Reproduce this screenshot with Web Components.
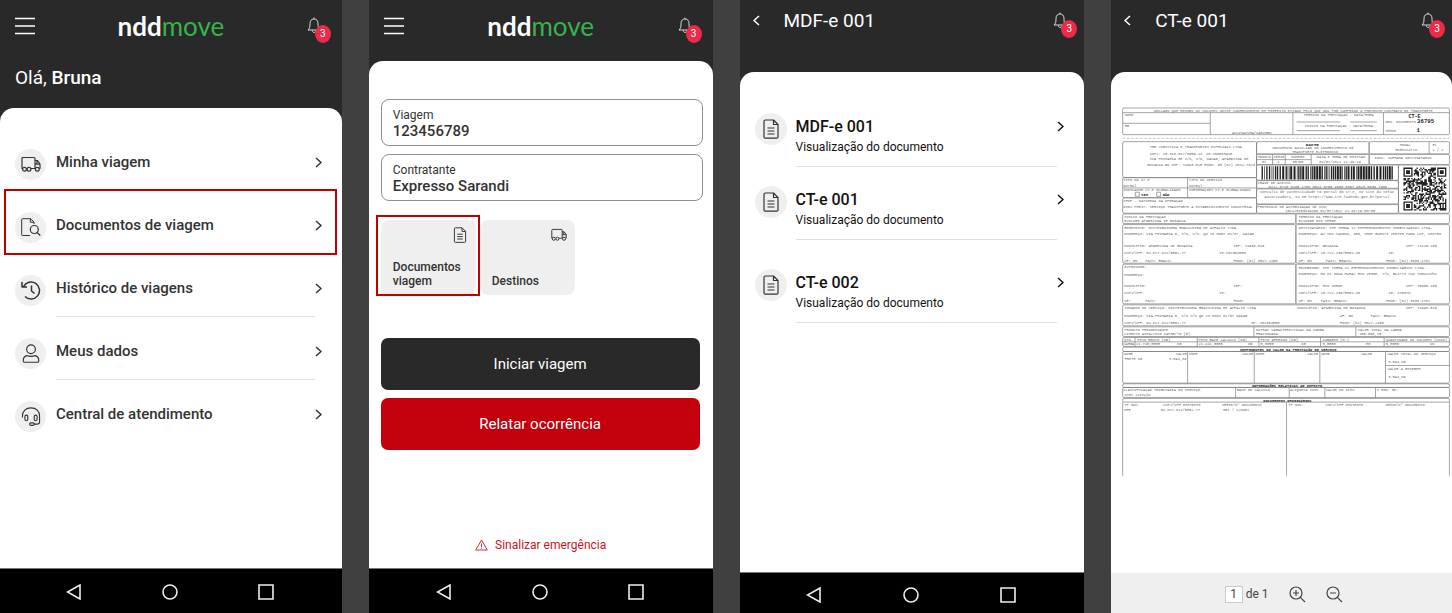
<!DOCTYPE html>
<html lang="pt-BR">
<head>
  <meta charset="utf-8">
  <meta name="viewport" content="width=device-width, initial-scale=1">
  <title>nddmove</title>
  <style>
    body {
      background-color: #404040;
      font-family: Roboto, "Liberation Sans", sans-serif;
      margin: 0;
    }

    main {
      display: grid;
      gap: 27px;
      grid-template-columns: 342fr 344fr 345fr 341fr;
      min-height: 100vh;
    }

    .trip {
      display: flex;
      flex-direction: column;
      gap: 8px;
      padding: 0 13px 0 12px;
    }

    .tiles {
      display: flex;
      gap: 4px;
      margin: 11px 0 35px;
    }

    .spaced {
      margin-top: 10px;
    }
  </style>
</head>
<body>
  <main>
    <phone-screen style="--sheet-top: 20px">
      <home-header slot="header" name="Bruna"></home-header>
      <menu-item icon="truck">Minha viagem</menu-item>
      <menu-item icon="search-doc" marked>Documentos de viagem</menu-item>
      <menu-item icon="history">Histórico de viagens</menu-item>
      <menu-item icon="user">Meus dados</menu-item>
      <menu-item icon="headset" last>Central de atendimento</menu-item>
      <android-nav slot="footer"></android-nav>
    </phone-screen>

    <phone-screen style="--sheet-top: 38px">
      <home-header slot="header"></home-header>
      <div class="trip">
        <info-field label="Viagem" value="123456789"></info-field>
        <info-field label="Contratante" value="Expresso Sarandi"></info-field>
        <div class="tiles">
          <action-tile icon="doc" marked>Documentos viagem</action-tile>
          <action-tile icon="truck">Destinos</action-tile>
        </div>
        <big-button>Iniciar viagem</big-button>
        <big-button danger>Relatar ocorrência</big-button>
      </div>
      <emergency-link slot="bottom">Sinalizar emergência</emergency-link>
      <android-nav slot="footer"></android-nav>
    </phone-screen>

    <phone-screen style="--sheet-top: 30px">
      <page-header slot="header">MDF-e 001</page-header>
      <document-item name="MDF-e 001">Visualização do documento</document-item>
      <document-item name="CT-e 001">Visualização do documento</document-item>
      <document-item class="spaced" name="CT-e 002">Visualização do documento</document-item>
      <android-nav slot="footer" short></android-nav>
    </phone-screen>

    <phone-screen style="--sheet-top: 35px">
      <page-header slot="header">CT-e 001</page-header>
      <cte-document></cte-document>
      <viewer-bar slot="footer"></viewer-bar>
    </phone-screen>
  </main>

  <script>
    const icons = {
      menu: { box: '0 0 20 18', path: '<path d="M0 1.500h20M0 9h20M0 16.500h20"/>' },
      bell: { box: '0 0 14 17', path: '<path d="M1 13c1.700-1.500 2-3 2-6.500C3 3.500 4.600 2 7 2s4 1.500 4 4.500c0 3.500.3 5 2 6.500zM7 2V.6M5.500 13.500c0 2.800 3 2.800 3 0"/>' },
      next: { box: '0 0 7 11', path: '<path d="M1 1l5 4.500L1 10"/>' },
      back: { box: '0 0 7 11', path: '<path d="M6 1L1 5.500 6 10"/>' },
      truck: { box: '0 0 20 16', path: '<path d="M2 12H1V2q0-1 1-1h11q1 0 1 1v10H9.900M14 4h2.500L19 7.500V12h-.8M14 7.700h5M16 4v3.700"/><circle cx="3.500" cy="12.700" r="1.900"/><circle cx="8" cy="12.700" r="1.900"/><circle cx="16.300" cy="12.700" r="1.900"/>' },
      'search-doc': { box: '0 0 20 19', path: '<path d="M9 17.500H1.500q-.8 0-.8-.8V1.500q0-.8.8-.8h8L13 4v2M9.300.7v3.500H13" stroke-width="1"/><circle cx="13.300" cy="11.500" r="4"/><path d="M16 14.500l3.300 3"/>' },
      history: { box: '0 0 20 19', path: '<path d="M2.500 5.500A8.500 8.500 0 1 1 4 15.500M1 1v5h5M10.500 4.500V10l3 2.500" stroke-width="1.500"/>' },
      user: { box: '0 0 18 20', path: '<circle cx="9" cy="5.500" r="4.600"/><path d="M4.500 12.200C2 13 .8 14.500.8 17.500q0 1.700 1.800 1.700h12.800q1.800 0 1.800-1.700c0-3-1.200-4.500-3.700-5.300q-4.500 1.800-9 0z"/>' },
      headset: { box: '0 0 20 20', path: '<path d="M1 11V9.500C1 4.500 4.500.9 10 .9s9 3.600 9 8.600V16q0 2-3 2h-3"/><rect x="3.600" y="8.500" width="3" height="6" rx="1.500"/><rect x="13.400" y="8.500" width="3" height="6" rx="1.500"/><rect x="8.500" y="16.700" width="5" height="2.600" rx="1.300"/>' },
      doc: { box: '0 0 16 20', path: '<path d="M2.500 1h8L15 5.500V18q0 1.200-1.200 1.200H2.200Q1 19.200 1 18V2.200Q1 1 2.500 1zM10.500 1v4.500H15M4.500 9h7M4.500 12h7M4.500 15h7"/>' },
      alert: { box: '0 0 13 12', path: '<path d="M6.500 1l5.800 10H.7zM6.500 4.500v3.300M6.500 8.700v1.100"/>' },
      'zoom-in': { box: '0 0 17 17', path: '<circle cx="7" cy="7" r="6"/><path d="M11.300 11.300L16 16M4 7h6M7 4v6"/>' },
      'zoom-out': { box: '0 0 17 17', path: '<circle cx="7" cy="7" r="6"/><path d="M11.300 11.300L16 16M4 7h6"/>' }
    }

    class AppIcon extends HTMLElement {
      connectedCallback () {
        const icon = icons[this.getAttribute('name')]

        if (!this.shadowRoot) this.attachShadow({ mode: 'open' })

        this.shadowRoot.innerHTML = `
          <style>
            :host {
              display: block;
              flex: none;
            }

            svg {
              display: block;
              fill: none;
              height: 100%;
              stroke: currentColor;
              stroke-linejoin: round;
              stroke-width: var(--stroke, 1.2);
              width: 100%;
            }
          </style>
          <svg viewBox="${icon.box}" aria-hidden="true">${icon.path}</svg>
        `
      }
    }

    class PhoneScreen extends HTMLElement {
      constructor () {
        super()
        this.attachShadow({ mode: 'open' }).innerHTML = `
          <style>
            :host {
              background-color: #292929;
              display: flex;
              flex-direction: column;
              min-width: 0;
            }

            .sheet {
              background-color: white;
              border-radius: 14px 14px 0 0;
              display: flex;
              flex: 1;
              flex-direction: column;
              justify-content: space-between;
              padding-top: var(--sheet-top);
            }
          </style>
          <slot name="header"></slot>
          <div class="sheet">
            <div><slot></slot></div>
            <slot name="bottom"></slot>
          </div>
          <slot name="footer"></slot>
        `
      }
    }

    class NotificationBell extends HTMLElement {
      constructor () {
        super()
        this.attachShadow({ mode: 'open' }).innerHTML = `
          <style>
            :host {
              display: block;
            }

            button {
              background: transparent;
              border: none;
              color: #ddd;
              cursor: pointer;
              display: block;
              font: inherit;
              padding: 0;
              position: relative;
            }

            app-icon {
              height: 17px;
              width: 14px;
              --stroke: 1;
            }

            span {
              background-color: #ec2b4b;
              border-radius: 50%;
              color: white;
              font-size: 10px;
              height: 18px;
              left: 8px;
              line-height: 18px;
              position: absolute;
              text-align: center;
              top: 8px;
              width: 16px;
            }
          </style>
          <button aria-label="Notificações"><app-icon name="bell"></app-icon><span>3</span></button>
        `
      }
    }

    class HomeHeader extends HTMLElement {
      connectedCallback () {
        const name = this.getAttribute('name')

        if (!this.shadowRoot) this.attachShadow({ mode: 'open' })

        this.shadowRoot.innerHTML = `
          <style>
            :host {
              color: white;
              display: block;
            }

            .bar {
              align-items: center;
              display: grid;
              grid-template-columns: 20px 1fr 14px;
              height: 51px;
              padding: 0 21px 10px 15px;
            }

            .menu {
              background: transparent;
              border: none;
              color: white;
              cursor: pointer;
              padding: 0;
            }

            .menu app-icon {
              height: 18px;
              width: 20px;
              --stroke: 1.6;
            }

            .logo {
              font-family: Lato, sans-serif;
              font-size: 26px;
              font-weight: 700;
              line-height: 32px;
              text-align: center;
            }

            .logo span {
              color: #34b44a;
              font-weight: 400;
            }

            p {
              font-size: 19px;
              line-height: 24px;
              margin: 0;
              padding: 5px 15px 18px;
            }

            b {
              font-weight: 500;
            }
          </style>
          <div class="bar">
            <button class="menu" aria-label="Menu"><app-icon name="menu"></app-icon></button>
            <div class="logo">ndd<span>move</span></div>
            <notification-bell></notification-bell>
          </div>
          ${name ? `<p>Olá, <b>${name}</b></p>` : ''}
        `
      }
    }

    class PageHeader extends HTMLElement {
      constructor () {
        super()
        this.attachShadow({ mode: 'open' }).innerHTML = `
          <style>
            :host {
              align-items: center;
              color: white;
              display: flex;
              height: 40px;
              padding: 0 17px 32px 13px;
            }

            button {
              background: transparent;
              border: none;
              color: white;
              cursor: pointer;
              margin-right: 24px;
              padding: 0;
            }

            button app-icon {
              height: 11px;
              width: 7px;
              --stroke: 1.5;
            }

            h1 {
              flex: 1;
              font-size: 19px;
              font-weight: 400;
              margin: 0;
            }
          </style>
          <button aria-label="Voltar"><app-icon name="back"></app-icon></button>
          <h1><slot></slot></h1>
          <notification-bell></notification-bell>
        `
      }
    }

    class MenuItem extends HTMLElement {
      connectedCallback () {
        if (!this.shadowRoot) this.attachShadow({ mode: 'open' })

        this.shadowRoot.innerHTML = `
          <style>
            :host {
              display: block;
              position: relative;
            }

            a {
              align-items: center;
              color: #333;
              display: flex;
              font-size: 15px;
              font-weight: 500;
              gap: 10px;
              height: 63px;
              padding-left: 15px;
              text-decoration: none;
            }

            .icon {
              align-items: center;
              background-color: #efefef;
              border-radius: 50%;
              display: flex;
              height: 31px;
              justify-content: center;
              margin-top: 10px;
              width: 31px;
            }

            .icon app-icon {
              height: 19px;
              width: 20px;
            }

            .text {
              align-items: center;
              border-bottom: 1px solid #e3e3e3;
              box-sizing: border-box;
              display: flex;
              flex: 1;
              height: 63px;
              justify-content: space-between;
              margin-right: 27px;
              padding-top: 6px;
            }

            .text app-icon {
              height: 11px;
              margin-right: -7px;
              width: 7px;
              --stroke: 1.5;
            }

            :host([last]) .text {
              border-color: transparent;
            }

            :host([marked])::after {
              border: 2px solid #c00000;
              content: '';
              inset: -2px 5px -1px 4px;
              pointer-events: none;
              position: absolute;
            }
          </style>
          <a href="#">
            <span class="icon"><app-icon name="${this.getAttribute('icon')}"></app-icon></span>
            <span class="text"><slot></slot><app-icon name="next"></app-icon></span>
          </a>
        `
      }
    }

    class InfoField extends HTMLElement {
      connectedCallback () {
        if (!this.shadowRoot) this.attachShadow({ mode: 'open' })

        this.shadowRoot.innerHTML = `
          <style>
            :host {
              border: 1px solid #8f8f8f;
              border-radius: 8px;
              box-sizing: border-box;
              color: #333;
              display: block;
              height: 47px;
              margin-right: -3px;
              padding: 8px 11px;
            }

            label {
              display: block;
              font-size: 12px;
              line-height: 15px;
            }

            input {
              background: transparent;
              border: none;
              box-sizing: border-box;
              color: inherit;
              display: block;
              font: 500 15px/17px Roboto, sans-serif;
              height: 17px;
              outline: none;
              padding: 0;
              width: 100%;
            }
          </style>
          <label for="value">${this.getAttribute('label')}</label>
          <input id="value" type="text" value="${this.getAttribute('value')}" readonly>
        `
      }
    }

    class ActionTile extends HTMLElement {
      connectedCallback () {
        if (!this.shadowRoot) this.attachShadow({ mode: 'open' })

        this.shadowRoot.innerHTML = `
          <style>
            :host {
              display: block;
              position: relative;
              width: 95px;
            }

            button {
              background-color: #efefef;
              border: none;
              border-radius: 8px;
              color: #333;
              cursor: pointer;
              display: flex;
              flex-direction: column;
              font: 500 12px/14px Roboto, sans-serif;
              height: 75px;
              justify-content: space-between;
              padding: 7px 8px 7px 12px;
              text-align: left;
              width: 100%;
            }

            app-icon {
              align-self: flex-end;
              height: 16px;
              width: 16px;
            }

            :host([marked])::after {
              border: 2px solid #c00000;
              content: '';
              inset: -5px -4px -1px -5px;
              pointer-events: none;
              position: absolute;
            }
          </style>
          <button><app-icon name="${this.getAttribute('icon')}"></app-icon><slot></slot></button>
        `
      }
    }

    class BigButton extends HTMLElement {
      constructor () {
        super()
        this.attachShadow({ mode: 'open' }).innerHTML = `
          <style>
            :host {
              display: block;
            }

            button {
              background-color: #292929;
              border: none;
              border-radius: 7px;
              color: white;
              cursor: pointer;
              display: block;
              font: 400 15px/20px Roboto, sans-serif;
              height: 52px;
              width: 100%;
            }

            :host([danger]) button {
              background-color: #c4000d;
            }
          </style>
          <button><slot></slot></button>
        `
      }
    }

    class EmergencyLink extends HTMLElement {
      constructor () {
        super()
        this.attachShadow({ mode: 'open' }).innerHTML = `
          <style>
            :host {
              display: flex;
              justify-content: center;
              padding-bottom: 15px;
            }

            a {
              align-items: center;
              color: #cf1225;
              display: flex;
              font-size: 12px;
              gap: 7px;
              line-height: 16px;
              text-decoration: none;
            }

            app-icon {
              height: 12px;
              width: 13px;
              --stroke: 0.9;
            }
          </style>
          <a href="#"><app-icon name="alert"></app-icon><slot></slot></a>
        `
      }
    }

    class DocumentItem extends HTMLElement {
      connectedCallback () {
        if (!this.shadowRoot) this.attachShadow({ mode: 'open' })

        this.shadowRoot.innerHTML = `
          <style>
            :host {
              display: block;
              height: 73px;
            }

            a {
              color: #111;
              display: flex;
              gap: 9px;
              padding-left: 15px;
              text-decoration: none;
            }

            .icon {
              align-items: center;
              background-color: #efefef;
              border-radius: 50%;
              color: #333;
              display: flex;
              height: 32px;
              justify-content: center;
              margin-top: 11px;
              width: 32px;
            }

            .icon app-icon {
              height: 20px;
              width: 16px;
            }

            .text {
              border-bottom: 1px solid #e0e0e0;
              box-sizing: border-box;
              display: flex;
              flex: 1;
              font-size: 12px;
              height: 65px;
              justify-content: space-between;
              line-height: 20px;
              margin-right: 27px;
              padding-top: 15px;
            }

            .text app-icon {
              height: 11px;
              margin: 4px -7px 0 0;
              width: 7px;
              --stroke: 1.5;
            }

            strong {
              display: block;
              font-size: 16px;
              font-weight: 500;
            }
          </style>
          <a href="#">
            <span class="icon"><app-icon name="doc"></app-icon></span>
            <span class="text">
              <span><strong>${this.getAttribute('name')}</strong><slot></slot></span>
              <app-icon name="next"></app-icon>
            </span>
          </a>
        `
      }
    }

    class AndroidNav extends HTMLElement {
      constructor () {
        super()
        this.attachShadow({ mode: 'open' }).innerHTML = `
          <style>
            :host {
              align-items: center;
              background-color: black;
              border-top: 1px solid #777;
              box-sizing: border-box;
              display: flex;
              gap: 80px;
              height: 45px;
              justify-content: center;
              padding: 2px 2px 0 0;
            }

            :host([short]) {
              gap: 81px;
              height: 41px;
              padding-top: 4px;
            }

            button {
              background: transparent;
              border: none;
              color: #eee;
              cursor: pointer;
              padding: 0;
            }

            svg {
              display: block;
              fill: none;
              height: 16px;
              stroke: currentColor;
              stroke-width: 1.6;
              width: 16px;
            }
          </style>
          <button aria-label="Voltar"><svg viewBox="0 0 16 16"><path d="M14 1v14L1.500 8z"/></svg></button>
          <button aria-label="Início"><svg viewBox="0 0 16 16"><circle cx="8" cy="8" r="7"/></svg></button>
          <button aria-label="Recentes"><svg viewBox="0 0 16 16"><path d="M1 1h14v14H1z"/></svg></button>
        `
      }
    }

    class ViewerBar extends HTMLElement {
      constructor () {
        super()
        this.attachShadow({ mode: 'open' }).innerHTML = `
          <style>
            :host {
              align-items: center;
              background-color: #efefef;
              box-sizing: border-box;
              color: #444;
              display: flex;
              font-size: 12px;
              height: 40px;
              justify-content: center;
              padding: 2px 0 0 4px;
            }

            label {
              align-items: center;
              display: flex;
              gap: 3px;
            }

            input {
              background-color: white;
              border: 1px solid #ccc;
              box-sizing: border-box;
              color: inherit;
              font: 400 12px Roboto, sans-serif;
              height: 17px;
              padding: 0;
              text-align: center;
              width: 18px;
            }

            button {
              background: transparent;
              border: none;
              color: inherit;
              cursor: pointer;
              margin-left: 20px;
              padding: 0;
            }

            app-icon {
              height: 17px;
              width: 17px;
            }
          </style>
          <label><input type="text" value="1" aria-label="Página"> de 1</label>
          <button aria-label="Ampliar"><app-icon name="zoom-in"></app-icon></button>
          <button aria-label="Reduzir"><app-icon name="zoom-out"></app-icon></button>
        `
      }
    }

    // boxes of the printed form: x, y, width, height
    const boxes = [
      [2, 3, 981, 80], [2, 104, 402, 108], [2, 212, 402, 60], [2, 273, 402, 46],
      [404, 104, 338, 37], [742, 104, 241, 37], [404, 142, 338, 31], [742, 142, 241, 31],
      [404, 174, 426, 46], [404, 221, 426, 23], [404, 246, 426, 45], [404, 293, 426, 26],
      [830, 174, 153, 145], [2, 321, 520, 29], [522, 321, 461, 29], [2, 353, 520, 116],
      [522, 353, 461, 116], [2, 472, 520, 119], [522, 472, 461, 119], [2, 594, 981, 63],
      [2, 660, 981, 29], [2, 692, 981, 27], [2, 721, 981, 13], [2, 734, 981, 95],
      [2, 831, 981, 11], [2, 842, 981, 30], [2, 875, 981, 11]
    ]

    const lines = 'M2 17H983M265 17V83M2 49H265M513 17V83M785 17V83M524 45H655M685 45H765M524 71H655M685 71H765' +
      'M197 212V272M2 243H404M922 104V141M452 142V173M490 142V173M568 142V173M404 158H568' +
      'M396 660V689M702 660V689M2 705H983M39 692V719M226 692V719M411 692V719M596 692V719M787 692V719' +
      'M197 734V829M397 734V829M594 734V829M791 734V829M791 776H983' +
      'M341 842V872M502 842V872M609 842V872M761 842V872M2 886V1107M494 886V1107M983 886V1107' +
      'M40 256h12v12H40zM104 256h12v12h-12z'

    // x, baseline, text
    const texts = [
      [96, 14, 'DECLARO QUE RECEBI OS VOLUMES DESTE CONHECIMENTO EM PERFEITO ESTADO PELO QUE DOU POR CUMPRIDO O PRESENTE CONTRATO DE TRANSPORTE'],
      [8, 27, 'NOME'], [8, 60, 'RG'], [330, 80, 'ASSINATURA/CARIMBO'],
      [545, 27, 'TÉRMINO DA PRESTAÇÃO - DATA/HORA'], [549, 60, 'INÍCIO DA PRESTAÇÃO - DATA/HORA'],
      [790, 49, 'NRO. DOCUMENTO'], [790, 75, 'SÉRIE'],
      [83, 124, 'TRR LOGISTICA E TRANSPORTES ESPECIAIS LTDA'],
      [83, 144, 'CNPJ: 10.316.517/0006-14'], [252, 144, 'IE:106033910'],
      [83, 160, 'VIA PRIMARIA 5E S/N, S/N, DAIAG, APARECIDA DE'],
      [76, 176, 'GOIANIA-GO CEP: 74993-510 FONE: 55 (62) 4011-7813'],
      [452, 127, 'DOCUMENTO AUXILIAR DO CONHECIMENTO DE'], [510, 139, 'TRANSPORTE ELETRÔNICO'],
      [834, 117, 'MODAL'], [820, 132, 'Rodoviário'], [932, 117, 'FL'], [932, 132, '1 / 1'],
      [408, 153, 'MODELO'], [455, 153, 'SÉRIE'], [508, 153, 'NÚMERO'], [585, 153, 'DATA E HORA DE EMISSÃO'],
      [420, 168, '57'], [466, 168, '1'], [512, 168, '36795'], [592, 168, '04/07/2022 11:46:19'],
      [758, 156, 'INSC. SUFRAMA DESTINATÁRIO'],
      [4, 223, 'TIPO DO CT-E'], [201, 223, 'TIPO DO SERVIÇO'], [4, 239, 'Normal'], [201, 239, 'Normal'],
      [4, 253, 'INDICADOR CT-E GLOBALIZADO'], [201, 253, 'INFORMAÇÕES CT-E GLOBALIZADO'],
      [4, 284, 'CFOP - NATUREZA DA OPERAÇÃO'],
      [4, 302, '6352 PREST. SERVIÇO TRANSPORTE A ESTABELECIMENTO INDUSTRIAL'],
      [407, 230, 'CHAVE DE ACESSO'], [440, 242, '5222 0710 3165 1700 0614 5700 1000 0367 9510 0036 7958'],
      [415, 257, 'Consulta de autenticidade no portal do CT-e, no site da Sefaz'],
      [428, 273, 'Autorizadora, ou em https://www.cte.fazenda.gov.br/portal'],
      [407, 303, 'PROTOCOLO DE AUTORIZAÇÃO DE USO:'], [490, 316, '152220103819406 04/07/2022 11:46:19-03:00'],
      [6, 332, 'INÍCIO DA PRESTAÇÃO'], [6, 345, '5201405 APARECIDA DE GOIANIA'],
      [530, 332, 'TÉRMINO DA PRESTAÇÃO'], [530, 345, '5218805 RIO VERDE'],
      [7, 365, 'REMETENTE: DISTRIBUIDORA BRASILEIRA DE ASFALTO LTDA'],
      [7, 383, 'ENDEREÇO: VIA PRIMARIA 5, S/N, S/N. QD 13 MODS 01/07, DAIAG'],
      [7, 419, 'MUNICÍPIO: APARECIDA DE GOIANIA'], [335, 419, 'CEP: 74993-510'],
      [7, 441, 'CNPJ/CPF: 04.817.821/0002-77'], [292, 441, 'IE:101364550'],
      [7, 464, 'UF: GO'], [70, 464, 'PAÍS: BRASIL'], [335, 464, 'FONE: (62) 3517-2100'],
      [530, 365, 'DESTINATÁRIO: SPE TERRA 11 EMPREENDIMENTOS IMOBILIÁRIOS LTDA.'],
      [530, 383, 'ENDEREÇO: AV SEN CANEDO, 800, SHOP BURITI CENTER PARK LOT, CENTRO'],
      [530, 419, 'MUNICÍPIO: GOIANIA'], [853, 419, 'CEP: 74110-100'],
      [530, 441, 'CNPJ/CPF: 10.722.136/0001-45'], [800, 441, 'IE:'],
      [530, 464, 'UF: GO'], [612, 464, 'PAÍS: BRASIL'], [793, 464, 'FONE: (62) 3883-1781'],
      [7, 484, 'EXPEDIDOR:'], [7, 507, 'ENDEREÇO:'], [7, 540, 'MUNICÍPIO:'], [335, 540, 'CEP:'],
      [7, 562, 'CNPJ/CPF:'], [292, 562, 'IE:'], [7, 585, 'UF:'], [70, 585, 'PAÍS:'], [335, 585, 'FONE:'],
      [530, 486, 'RECEBEDOR: SPE TERRA 11 EMPREENDIMENTOS IMOBILIÁRIOS LTDA.'],
      [530, 505, 'ENDEREÇO: RO ZI ZONA RURAL RIO VERDE, S/N, Bairro Sao Tomazinho'],
      [530, 541, 'MUNICÍPIO: RIO VERDE'], [853, 541, 'CEP: 75900-100'],
      [530, 562, 'CNPJ/CPF: 10.722.136/0001-45'], [800, 562, 'IE: ISENTO'],
      [530, 586, 'UF: GO'], [597, 586, 'PAÍS: BRASIL'], [793, 586, 'FONE: (62) 3883-1781'],
      [7, 606, 'TOMADOR DO SERVIÇO: DISTRIBUIDORA BRASILEIRA DE ASFALTO LTDA'],
      [526, 606, 'MUNICÍPIO: APARECIDA DE GOIANIA'], [853, 606, 'CEP: 74993-510'],
      [7, 629, 'ENDEREÇO: VIA PRIMARIA 5, S/N S/N QD 13 MODS 01/07 DAIAG'],
      [654, 629, 'UF: GO'], [746, 629, 'PAÍS: BRASIL'],
      [7, 652, 'CNPJ/CPF: 04.817.821/0002-77'], [387, 652, 'IE: 101364550'], [654, 652, 'FONE: (62) 3517-2100'],
      [7, 671, 'PRODUTO PREDOMINANTE'], [402, 671, 'OUTRAS CARACTERÍSTICAS DA CARGA'], [708, 671, 'VALOR TOTAL DA CARGA'],
      [7, 685, 'CIMENTO ASFALTICO CAP50/70 (G)'], [402, 685, 'FRACIONADA'], [712, 685, '100.096,10'],
      [7, 703, 'QTD.'], [46, 703, 'PESO BRUTO (KG)'], [230, 703, 'PESO BASE CÁLCULO (KG)'], [416, 703, 'PESO AFERIDO (KG)'],
      [602, 703, 'CUBAGEM (M³)'], [792, 703, 'QUANTIDADE DE VOLUMES (UNID)'],
      [4, 716, 'CARGA'], [42, 716, '21.740,0000'], [165, 716, 'KG'], [230, 716, '21.441,0000'], [378, 716, 'KG'],
      [416, 716, '0,0000'], [538, 716, 'KG'], [602, 716, '0,0000'], [732, 716, 'M3'], [792, 716, '0,0000'], [925, 716, 'UN'],
      [6, 746, 'NOME'], [162, 746, 'VALOR'], [201, 746, 'NOME'], [361, 746, 'VALOR'], [401, 746, 'NOME'], [556, 746, 'VALOR'],
      [598, 746, 'NOME'], [718, 746, 'VALOR'], [797, 746, 'VALOR TOTAL DO SERVIÇO'],
      [8, 760, 'FRETE KG'], [141, 760, '3.594,89'], [799, 768, '3.594,89'],
      [797, 791, 'VALOR A RECEBER'], [799, 813, '3.594,89'],
      [4, 852, 'CLASSIFICAÇÃO TRIBUTÁRIA DO SERVIÇO'], [345, 852, 'BASE DE CÁLCULO'], [504, 852, 'ALÍQUOTA ICMS'],
      [612, 852, 'VALOR DO ICMS'], [765, 852, '% RED. BC.'], [7, 867, 'ICMS isenção'],
      [7, 899, 'TP DOC.'], [124, 899, 'CNPJ/CPF EMITENTE'], [300, 899, 'SÉRIE/Nº DOCUMENTO'],
      [500, 899, 'TP DOC.'], [612, 899, 'CNPJ/CPF EMITENTE'], [790, 899, 'SÉRIE/Nº DOCUMENTO'],
      [7, 912, 'NFE'], [116, 912, '04.817.821/0002-77'], [303, 912, '001 / 128802']
    ]

    const strongTexts = [
      [860, 32, 'CT-E', 15], [886, 49, '36795', 17], [884, 76, '1', 17], [552, 117, 'DACTE', 13],
      [58, 267, 'SIM', 11], [122, 267, 'NÃO', 11],
      [354, 732, 'COMPONENTES DO VALOR DA PRESTAÇÃO DE SERVIÇO', 11],
      [390, 841, 'INFORMAÇÕES RELATIVAS AO IMPOSTO', 11], [424, 885, 'DOCUMENTOS ORIGINÁRIOS', 11]
    ]

    class CteDocument extends HTMLElement {
      constructor () {
        super()
        this.attachShadow({ mode: 'open' })
        this.seed = 36795
      }

      connectedCallback () {
        this.render()
      }

      random () {
        this.seed = (this.seed * 1103515245 + 12345) % 2147483648
        return this.seed / 2147483648
      }

      barcode () {
        let path = ''
        let x = 419

        while (x < 812) {
          const width = 2 + Math.floor(this.random() * 3) * 2
          path += `M${x} 178h${width}v40h-${width}z`
          x += width + 2 + Math.floor(this.random() * 2) * 2
        }

        return path
      }

      qrCode () {
        const size = 33
        const inFinder = (x, y) => (x < 8 && y < 8) || (x > 24 && y < 8) || (x < 8 && y > 24)
        let path = ''

        for (let y = 0; y < size; y++) {
          for (let x = 0; x < size; x++) {
            if (!inFinder(x, y) && this.random() > 0.48) {
              path += `M${x} ${y}h1v1h-1z`
            }
          }
        }

        for (const [x, y] of [[0, 0], [26, 0], [0, 26]]) {
          path += `M${x} ${y}h7v7h-7zM${x + 1} ${y + 1}v5h5v-5zM${x + 2} ${y + 2}h3v3h-3z`
        }

        return path
      }

      render () {
        this.shadowRoot.innerHTML = `
          <style>
            :host {
              display: block;
              padding: 0 2px 0 11px;
            }

            svg {
              display: block;
              font-family: "Liberation Mono", monospace;
              font-size: 11px;
              width: 100%;
            }

            .rules {
              fill: none;
              stroke: #777;
              stroke-width: 2;
            }

            .small {
              fill: #666;
            }

            .strong {
              fill: #222;
              font-weight: 700;
            }
          </style>
          <svg viewBox="0 0 984 1108" role="img" aria-label="CT-e 001">
            <g class="rules">
              ${boxes.map(([x, y, w, h]) => `<rect x="${x}" y="${y}" width="${w}" height="${h}" rx="4"/>`).join('')}
              <path d="${lines}"/>
              <path d="M2 94H983" stroke="#aaa" stroke-dasharray="8 5"/>
            </g>
            <g class="small">
              ${texts.map(([x, y, text]) => `<text x="${x}" y="${y}">${text}</text>`).join('')}
            </g>
            <g class="strong">
              ${strongTexts.map(([x, y, text, size]) => `<text x="${x}" y="${y}" font-size="${size}">${text}</text>`).join('')}
            </g>
            <path d="${this.barcode()}" fill="#222"/>
            <path d="${this.qrCode()}" fill="#222" transform="translate(845 182) scale(3.900)"/>
          </svg>
        `
      }
    }

    customElements.define('app-icon', AppIcon)
    customElements.define('phone-screen', PhoneScreen)
    customElements.define('notification-bell', NotificationBell)
    customElements.define('home-header', HomeHeader)
    customElements.define('page-header', PageHeader)
    customElements.define('menu-item', MenuItem)
    customElements.define('info-field', InfoField)
    customElements.define('action-tile', ActionTile)
    customElements.define('big-button', BigButton)
    customElements.define('emergency-link', EmergencyLink)
    customElements.define('document-item', DocumentItem)
    customElements.define('android-nav', AndroidNav)
    customElements.define('viewer-bar', ViewerBar)
    customElements.define('cte-document', CteDocument)
  </script>
</body>
</html>
